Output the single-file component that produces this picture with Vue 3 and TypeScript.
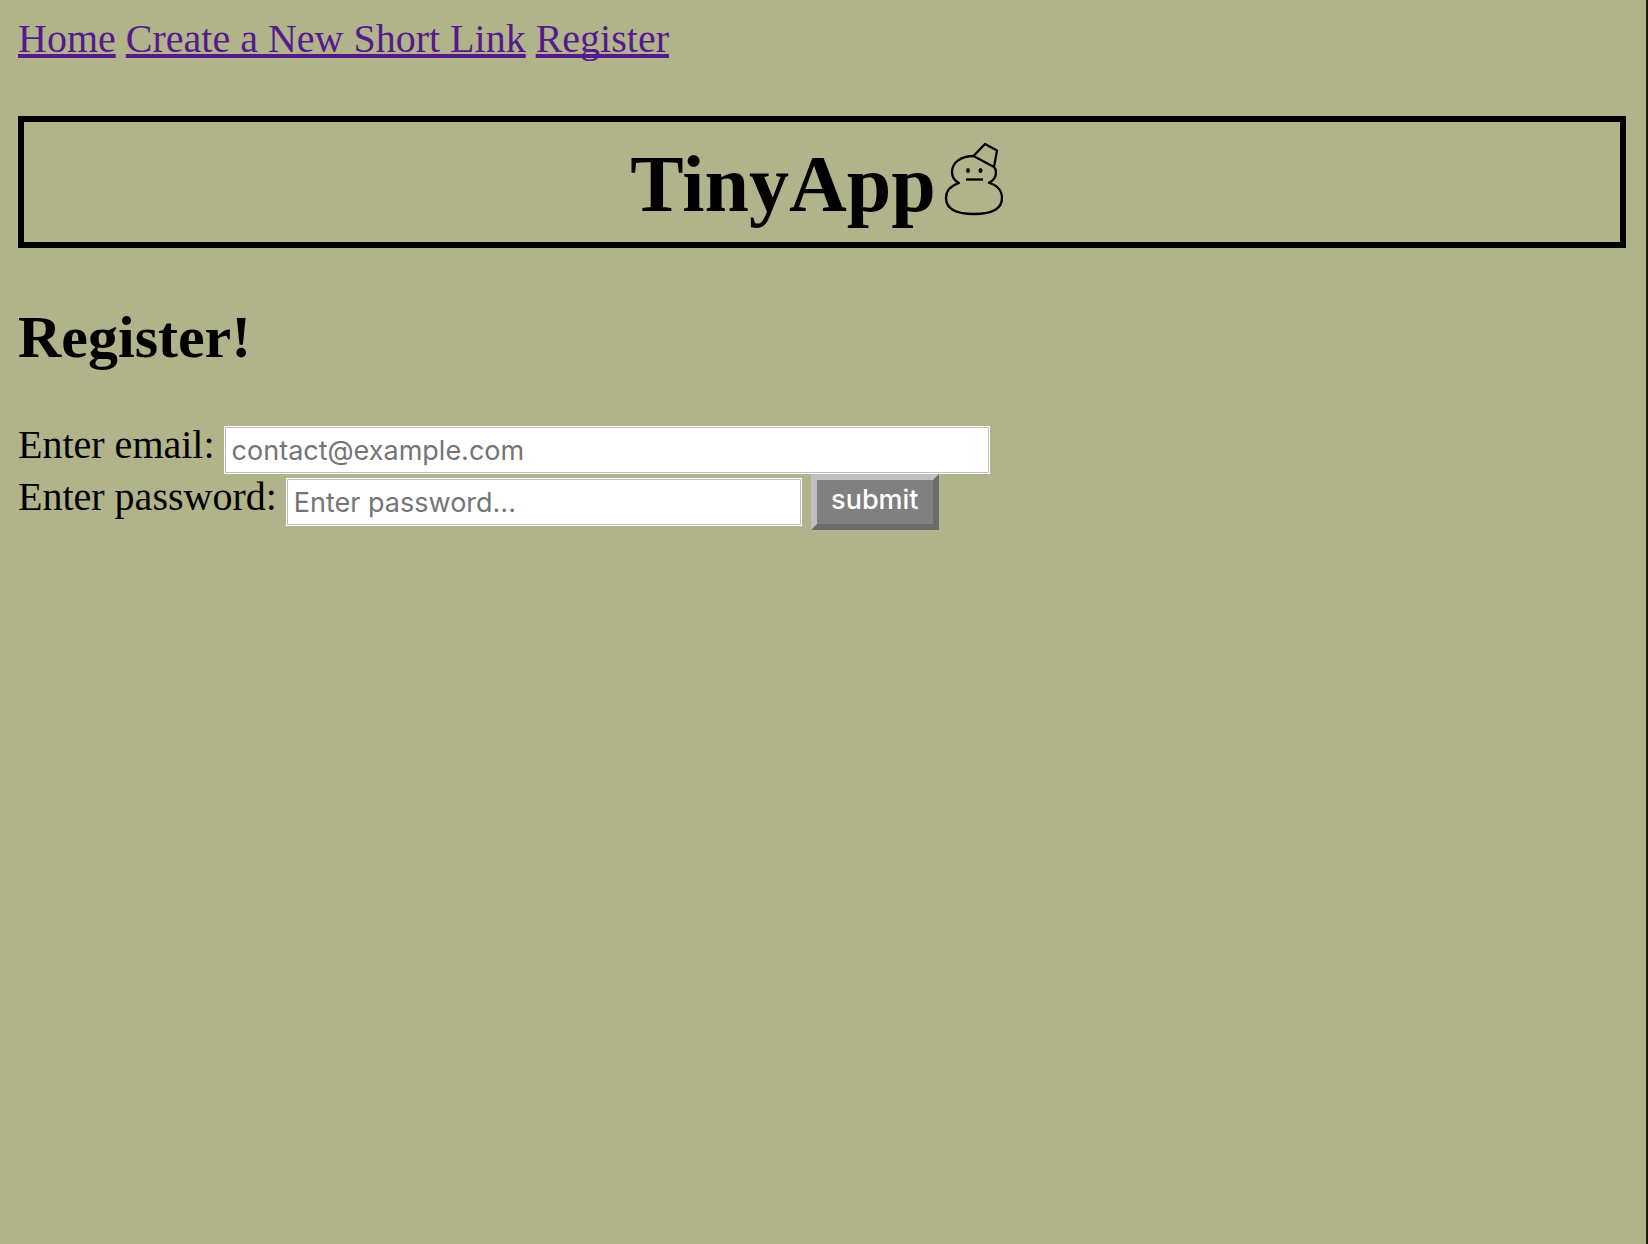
<script setup lang="ts">
import { ref } from 'vue'

interface NavLink {
  label: string
  href: string
}

const links: NavLink[] = [
  { label: 'Home', href: '#home' },
  { label: 'Create a New Short Link', href: '#new' },
  { label: 'Register', href: '#register' },
]

const email = ref('')
const password = ref('')
</script>

<template>
  <div class="page">
    <nav class="nav">
      <a v-for="link in links" :key="link.label" :href="link.href">{{ link.label }}</a>
    </nav>

    <header class="banner">
      <h1>TinyApp</h1>
      <svg class="snowman" viewBox="0 -2 78 80" aria-hidden="true">
        <g fill="none" stroke="#000" stroke-width="2.3" stroke-linejoin="round">
          <path d="M38 16C24 16 16 23 16 32C16 38 19 41 23 43C14 46 10 51 10 58C10 69 20 74 38 74C56 74 66 69 66 58C66 50 61 45 52 42.500" />
          <path d="M53 42.500C57 41 60 37 60 32Q60 29 58 27L37.500 16L49 4L61 10.500L58 27" />
          <path d="M30 39.500H47" />
        </g>
        <ellipse cx="32" cy="30.500" rx="2" ry="2.500" />
        <ellipse cx="44.500" cy="30.500" rx="2" ry="2.500" />
      </svg>
    </header>

    <main>
      <h2>Register!</h2>
      <form @submit.prevent>
        <div class="row">
          <label for="email">Enter email:</label>
          <input id="email" v-model="email" class="email" type="email" placeholder="contact@example.com">
        </div>
        <div class="row">
          <label for="password">Enter password:</label>
          <input id="password" v-model="password" class="password" type="password" placeholder="Enter password...">
          <button type="submit">submit</button>
        </div>
      </form>
    </main>
  </div>
</template>

<style>
body {
  margin: 0;
  background: #b1b48b;
}
</style>

<style scoped>
.page {
  box-sizing: border-box;
  min-height: 100vh;
  padding: 16px 20px 16px 18px;
  border-right: 2px solid #1a1c12;
  background: #b1b48b;
  color: #000;
  font-family: "Liberation Serif", "Times New Roman", serif;
  font-size: 40px;
  line-height: 46px;
}

.nav {
  display: flex;
  gap: 10px;
}

.nav a {
  color: #551a8b;
  text-decoration-line: underline;
  text-decoration-thickness: 4px;
  text-decoration-skip-ink: none;
  text-underline-offset: 2px;
}

.banner {
  display: flex;
  justify-content: center;
  margin-top: 54px;
  padding: 16px 0 12px;
  border: 6px solid #000;
}

h1 {
  margin: 0;
  font-size: 80px;
  line-height: 92px;
}

.snowman {
  width: 78px;
  height: 80px;
}

h2 {
  margin: 54px 0 50px;
  font-size: 60px;
  line-height: 70px;
}

.row {
  display: flex;
  align-items: flex-start;
  gap: 9px;
  height: 52px;
}

input {
  box-sizing: border-box;
  height: 48px;
  margin: 4px 0 0;
  padding: 0 7px;
  border: 1px solid #fff;
  border-radius: 0;
  outline: none;
  background: #fff;
  box-shadow: inset 0 0 0 1px #bebebe;
  color: #000;
  font: 27px/44px Inter, sans-serif;
}

input::placeholder {
  color: #757575;
  opacity: 1;
}

.email {
  width: 766px;
}

.password {
  width: 516px;
}

button {
  box-sizing: border-box;
  width: 128px;
  height: 56px;
  padding: 0 0 4px;
  border: 6px solid;
  border-color: #c0c0c0 #6b6b6b #6b6b6b #c0c0c0;
  border-radius: 0;
  background: #808080;
  color: #fff;
  font: 500 27px/40px Inter, sans-serif;
}
</style>
